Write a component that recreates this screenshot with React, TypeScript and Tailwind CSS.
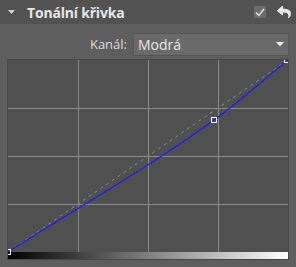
import { FaReply } from "react-icons/fa";

// plot geometry (px) — inner area of the curve box
const W = 280;
const H = 192;

// control points, normalized 0..1
const pts: [number, number][] = [
  [0, 0],
  [0.7357, 0.6875],
  [1, 1],
];

// monotone-ish cubic hermite through the points
function curvePath() {
  const n = pts.length;
  const d: number[] = [];
  for (let i = 0; i < n - 1; i++) {
    d.push((pts[i + 1][1] - pts[i][1]) / (pts[i + 1][0] - pts[i][0]));
  }
  const m: number[] = [d[0]];
  for (let i = 1; i < n - 1; i++) m.push((d[i - 1] + d[i]) / 2);
  m.push(d[n - 2]);

  const out: string[] = [];
  for (let i = 0; i < n - 1; i++) {
    const [x0, y0] = pts[i];
    const [x1, y1] = pts[i + 1];
    const h = x1 - x0;
    for (let s = 0; s <= 40; s++) {
      const t = s / 40;
      const h00 = 2 * t ** 3 - 3 * t ** 2 + 1;
      const h10 = t ** 3 - 2 * t ** 2 + t;
      const h01 = -2 * t ** 3 + 3 * t ** 2;
      const h11 = t ** 3 - t ** 2;
      const y = h00 * y0 + h10 * h * m[i] + h01 * y1 + h11 * h * m[i + 1];
      const x = x0 + t * h;
      out.push(`${(x * W).toFixed(2)},${((1 - y) * H).toFixed(2)}`);
    }
  }
  return "M" + out.join(" L");
}

function CurveGraph() {
  return (
    <svg width={W} height={H + 7} viewBox={`0 0 ${W} ${H + 7}`} className="block overflow-visible">
      <defs>
        <linearGradient id="tone" x1="0" x2="1" y1="0" y2="0">
          <stop offset="0" stopColor="#000" />
          <stop offset="1" stopColor="#fff" />
        </linearGradient>
      </defs>
      <rect x="0" y="0" width={W} height={H} fill="#505050" />
      {/* grid */}
      {[70, 140, 210].map((x) => (
        <line key={"v" + x} x1={x + 0.5} y1="0" x2={x + 0.5} y2={H} stroke="#8a8a8a" strokeWidth="1" />
      ))}
      {[48, 96, 144].map((y) => (
        <line key={"h" + y} x1="0" y1={y + 0.5} x2={W} y2={y + 0.5} stroke="#8a8a8a" strokeWidth="1" />
      ))}
      {/* identity diagonal */}
      <line x1="0" y1={H} x2={W} y2="0" stroke="#8e8e8e" strokeWidth="1" strokeDasharray="3 4" />
      {/* tone curve */}
      <path d={curvePath()} fill="none" stroke="#1c1cf2" strokeWidth="1.3" />
      {/* tone gradient */}
      <rect x="0" y={H} width={W} height="7" fill="url(#tone)" />
      {/* points */}
      <rect x="-2.5" y={H - 2.5} width="5" height="5" fill="none" stroke="#fff" strokeWidth="1" />
      <rect x="203.5" y="57.5" width="5" height="5" fill="none" stroke="#fff" strokeWidth="1" />
      <rect x={W - 3.5} y="-2.5" width="5" height="5" fill="none" stroke="#fff" strokeWidth="1" />
    </svg>
  );
}

export default function App() {
  return (
    <div
      className="w-[296px] h-[267px] bg-[#5e5e5e] overflow-hidden"
      style={{ fontFamily: '"Open Sans", "Noto Sans", sans-serif' }}
    >
      {/* panel header */}
      <div className="h-6 bg-[#525252] flex items-center pl-2 pr-[5px]">
        <svg width="7" height="4" viewBox="0 0 7 4" className="mr-[12px]">
          <path d="M0 0 H7 L3.5 4 Z" fill="#cfcfcf" />
        </svg>
        <span className="text-[14px] font-bold text-[#e6e6e6] tracking-[-0.2px]">Tonální křivka</span>
        <div className="ml-auto flex items-center gap-[11px]">
          <div className="w-3 h-3 bg-[#6e6e6e] flex items-center justify-center">
            <svg width="10" height="9" viewBox="0 0 10 9">
              <path d="M1 4.5 L3.8 7.5 L9 1" fill="none" stroke="#e4e4e4" strokeWidth="1.4" />
            </svg>
          </div>
          <FaReply size={14} className="text-[#e6e6e6]" />
        </div>
      </div>

      {/* channel selector */}
      <div className="flex items-center justify-end pr-[7px] mt-[9px]">
        <span className="text-[13px] text-[#dcdcdc] mr-[6px]">Kanál:</span>
        <div className="w-[156px] h-[23px] bg-[#6a6a6a] border border-[#555] flex items-center pl-[4px] pr-[4px]">
          <span className="text-[14px] text-[#e8e8e8]">Modrá</span>
          <svg width="8" height="5" viewBox="0 0 8 5" className="ml-auto">
            <path d="M0 0 H8 L4 4.5 Z" fill="#f0f0f0" />
          </svg>
        </div>
      </div>

      {/* curve editor */}
      <div className="ml-[7px] mt-[3px] w-[282px] border border-[#474747] overflow-hidden">
        <CurveGraph />
      </div>
    </div>
  );
}
